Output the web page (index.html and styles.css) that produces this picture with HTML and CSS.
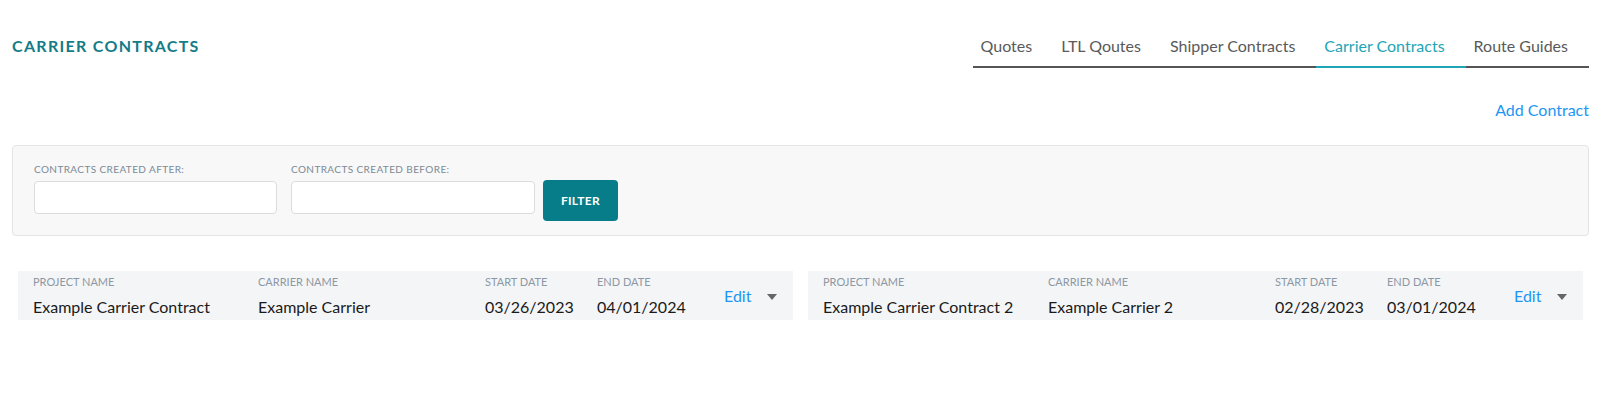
FILE: index.html
```html
<!DOCTYPE html>
<html lang="en">
<head>
<meta charset="utf-8">
<title>Carrier Contracts</title>
<link rel="stylesheet" href="styles.css">
</head>
<body>
<div class="page">
  <header class="header">
    <h1 class="title">CARRIER CONTRACTS</h1>
    <nav class="tabs">
      <a class="tab">Quotes</a>
      <a class="tab">LTL Qoutes</a>
      <a class="tab">Shipper Contracts</a>
      <a class="tab active">Carrier Contracts</a>
      <a class="tab">Route Guides</a>
    </nav>
  </header>
  <div class="actions"><a class="link">Add Contract</a></div>
  <section class="filter-box">
    <div class="field">
      <label class="field-label">CONTRACTS CREATED AFTER:</label>
      <input class="field-input" type="text">
    </div>
    <div class="field">
      <label class="field-label">CONTRACTS CREATED BEFORE:</label>
      <input class="field-input" type="text">
    </div>
    <button class="filter-btn">FILTER</button>
  </section>
  <section class="cards">
    <div class="card">
      <div class="col col-project"><div class="col-label">PROJECT NAME</div><div class="col-value">Example Carrier Contract</div></div>
      <div class="col col-carrier"><div class="col-label">CARRIER NAME</div><div class="col-value">Example Carrier</div></div>
      <div class="col col-start"><div class="col-label">START DATE</div><div class="col-value">03/26/2023</div></div>
      <div class="col col-end"><div class="col-label">END DATE</div><div class="col-value">04/01/2024</div></div>
      <a class="link edit">Edit</a>
      <span class="caret"></span>
    </div>
    <div class="card">
      <div class="col col-project"><div class="col-label">PROJECT NAME</div><div class="col-value">Example Carrier Contract 2</div></div>
      <div class="col col-carrier"><div class="col-label">CARRIER NAME</div><div class="col-value">Example Carrier 2</div></div>
      <div class="col col-start"><div class="col-label">START DATE</div><div class="col-value">02/28/2023</div></div>
      <div class="col col-end"><div class="col-label">END DATE</div><div class="col-value">03/01/2024</div></div>
      <a class="link edit">Edit</a>
      <span class="caret"></span>
    </div>
  </section>
</div>
</body>
</html>
```
FILE: styles.css
```css
* { box-sizing: border-box; }
html, body { margin: 0; padding: 0; background: #fff; }
body {
  font-family: Lato, "Liberation Sans", sans-serif;
  color: #111;
}
.page {
  padding: 0 11px 0 12px;
}
.header {
  display: flex;
  justify-content: space-between;
  align-items: flex-start;
  padding-top: 36px;
}
.title {
  margin: 0;
  font-size: 16px;
  line-height: 19px;
  font-weight: 700;
  letter-spacing: 1.3px;
  color: #137c88;
}
.tabs {
  display: flex;
}
.tab {
  display: block;
  font-size: 16px;
  line-height: 19px;
  color: #5a5a5a;
  padding: 0 21px 11px 8px;
  border-bottom: 2px solid #555;
  cursor: pointer;
}
.tab.active {
  color: #1ea5b6;
  border-bottom-color: #1ea5b6;
}
.actions {
  margin: 32px 0 26px;
  text-align: right;
  font-size: 16px;
  line-height: 19px;
}
.link {
  color: #2196f3;
  cursor: pointer;
}
.filter-box {
  display: flex;
  align-items: flex-start;
  background: #f8f8f8;
  border: 1px solid #e4e4e4;
  border-radius: 4px;
  padding: 17px 20px 14px 21px;
}
.field {
  margin-right: 14px;
}
.field-label {
  display: block;
  font-size: 10px;
  line-height: 12px;
  letter-spacing: 0.4px;
  color: #7b8a96;
  margin-bottom: 6px;
}
.field-input {
  display: block;
  width: 243px;
  height: 33px;
  border: 1px solid #dcdcdc;
  border-radius: 4px;
  background: #fff;
  font-family: inherit;
  font-size: 14px;
  padding: 0 8px;
  margin: 0;
}
.field + .field .field-input { width: 244px; }
.field + .field { margin-right: 8px; }
.filter-btn {
  margin-top: 17px;
  width: 75px;
  height: 41px;
  border: none;
  border-radius: 4px;
  background: #067d89;
  color: #fff;
  font-family: inherit;
  font-weight: 700;
  font-size: 12px;
  letter-spacing: 0.3px;
  padding: 0;
  cursor: pointer;
}
.cards {
  display: grid;
  grid-template-columns: 1fr 1fr;
  gap: 15px;
  margin: 35px 6px 0;
}
.card {
  display: flex;
  align-items: center;
  background: #f4f5f7;
  padding: 4px 14px 4px 15px;
}
.col { flex: none; }
.col-project { width: 225px; }
.col-carrier { width: 227px; }
.col-start { width: 112px; }
.col-end { width: 127px; }
.col-label {
  font-size: 11px;
  line-height: 13px;
  color: #8c98a4;
  margin-bottom: 9px;
  white-space: nowrap;
}
.col-value {
  font-size: 16px;
  line-height: 19px;
  color: #1a1a1a;
  white-space: nowrap;
}
.edit {
  flex: none;
  font-size: 16px;
  line-height: 19px;
}
.caret {
  flex: none;
  margin-left: 16px;
  width: 0;
  height: 0;
  border-left: 5.5px solid transparent;
  border-right: 5.5px solid transparent;
  border-top: 6px solid #666;
  margin-top: 2px;
}
```
